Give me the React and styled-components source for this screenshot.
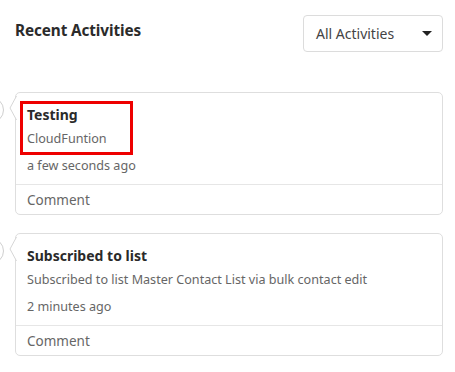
import React from "react";
import styled, { createGlobalStyle } from "styled-components";

const Global = createGlobalStyle`
  html, body { margin: 0; padding: 0; background: #fff; }
  body { font-family: "Noto Sans", "Open Sans", sans-serif; color: #222; }
  * { box-sizing: border-box; }
`;

const Page = styled.div`
  width: 455px;
  height: 372px;
  overflow: hidden;
  padding: 15px 12px 0 15px;
`;

const Header = styled.div`
  display: flex;
  justify-content: space-between;
  align-items: flex-start;
`;

const Title = styled.h2`
  margin: 5px 0 0;
  font-size: 15.3px;
  font-weight: 700;
  color: #2b2b2b;
  letter-spacing: -0.1px;
`;

const Select = styled.div`
  width: 140px;
  height: 37px;
  border: 1px solid #dcdcdc;
  border-radius: 4px;
  display: flex;
  align-items: center;
  justify-content: space-between;
  padding: 0 10px 0 12px;
  font-size: 14px;
  color: #444;
`;

const Caret = styled.span`
  width: 0;
  height: 0;
  border-left: 5px solid transparent;
  border-right: 5px solid transparent;
  border-top: 5px solid #222;
`;

const List = styled.div`
  margin-top: 40px;
  display: flex;
  flex-direction: column;
  gap: 18px;
`;

const Card = styled.div`
  position: relative;
  border: 1px solid #dedede;
  border-radius: 5px;
  background: #fff;
`;

const Marker = styled.span`
  position: absolute;
  left: -38px;
  top: 4px;
  width: 26px;
  height: 26px;
  border-radius: 50%;
  border: 1px solid #cfcfcf;
  background: #fff;
`;

const Pointer = styled.svg`
  position: absolute;
  left: -7px;
  top: 3px;
  width: 8px;
  height: 24px;
`;

const Body = styled.div`
  padding: 13px 11px 10px;
  display: flex;
  flex-direction: column;
`;

const Highlight = styled.div`
  position: relative;
`;

const Box = styled.span`
  position: absolute;
  left: -7px;
  top: -5px;
  width: 113px;
  height: 54px;
  border: 3px solid #ee0000;
  pointer-events: none;
`;

const ItemTitle = styled.div`
  font-size: 14px;
  font-weight: 700;
  color: #2a2a2a;
  line-height: 18px;
`;

const Line = styled.div`
  font-size: 12.6px;
  color: #666;
  line-height: 16px;
  margin-top: ${(p) => p.$gap}px;
`;

const Footer = styled.div`
  border-top: 1px solid #e6e6e6;
  padding: 0 11px;
  height: 30px;
  display: flex;
  align-items: center;
  font-size: 13.5px;
  color: #666;
`;

function Activity({ title, text, time, highlight }) {
  const head = (
    <>
      <ItemTitle>{title}</ItemTitle>
      <Line $gap={7}>{text}</Line>
    </>
  );
  return (
    <Card>
      <Marker />
      <Pointer viewBox="0 0 8 24">
        <polyline points="7.5,0 1,12 7.5,24" fill="#fff" stroke="#d6d6d6" strokeWidth="1" />
      </Pointer>
      <Body>
        {highlight ? (
          <Highlight>
            {head}
            <Box />
          </Highlight>
        ) : (
          head
        )}
        <Line $gap={11}>{time}</Line>
      </Body>
      <Footer>Comment</Footer>
    </Card>
  );
}

export default function App() {
  return (
    <Page>
      <Global />
      <Header>
        <Title>Recent Activities</Title>
        <Select>
          All Activities
          <Caret />
        </Select>
      </Header>
      <List>
        <Activity title="Testing" text="CloudFuntion" time="a few seconds ago" highlight />
        <Activity
          title="Subscribed to list"
          text="Subscribed to list Master Contact List via bulk contact edit"
          time="2 minutes ago"
        />
      </List>
    </Page>
  );
}
